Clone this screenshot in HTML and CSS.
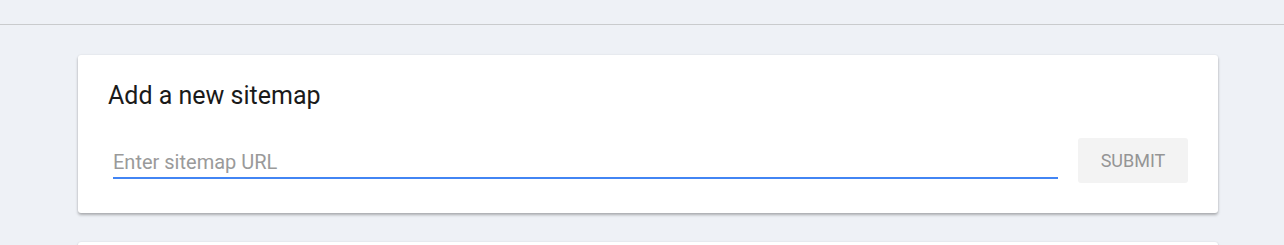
FILE: index.html
```html
<!DOCTYPE html>
<html lang="en">
<head>
    <meta charset="UTF-8">
    <meta name="viewport" content="width=device-width, initial-scale=1.0">
    <title>Sitemaps</title>
    <link rel="stylesheet" href="styles.css">
</head>
<body>
    <div class="top-bar"></div>

    <div class="content">
        <div class="card">
            <h2 class="card-title">Add a new sitemap</h2>
            <div class="sitemap-form">
                <input type="text" class="sitemap-input" placeholder="Enter sitemap URL">
                <button class="submit-btn" disabled>SUBMIT</button>
            </div>
        </div>
        <div class="card card-next"></div>
    </div>
</body>
</html>
```

FILE: styles.css
```css
body {
    margin: 0;
    font-family: Roboto, "Liberation Sans", Arial, sans-serif;
    background-color: #eef1f6;
}
.top-bar {
    height: 24px;
    border-bottom: 1px solid #c9cbcd;
}
.content {
    padding: 30px 66px 0 78px;
}
.card {
    background: white;
    border-radius: 3px;
    box-shadow: 0 2px 3px rgba(0, 0, 0, 0.28), 0 0 2px rgba(0, 0, 0, 0.08);
    padding: 25px 30px 30px 30px;
}
.card-title {
    margin: 0;
    font-size: 25px;
    font-weight: 400;
    line-height: 32px;
    color: #1a1a1a;
}
.sitemap-form {
    display: flex;
    align-items: flex-end;
    gap: 20px;
    margin-top: 26px;
    padding-left: 5px;
}
.sitemap-input {
    flex: 1;
    border: none;
    border-bottom: 2px solid #4285f4;
    outline: none;
    padding: 0 0 3px 0;
    margin-bottom: 4px;
    font-family: inherit;
    font-size: 20px;
    line-height: 24px;
    color: #212121;
    background: transparent;
}
.sitemap-input::placeholder {
    color: #9a9a9a;
}
.submit-btn {
    width: 110px;
    height: 45px;
    border: none;
    border-radius: 3px;
    background-color: #f3f3f3;
    color: #959595;
    font-family: inherit;
    font-size: 18px;
    font-weight: 400;
}
.card-next {
    margin-top: 29px;
    height: 40px;
    padding: 0;
}
```
